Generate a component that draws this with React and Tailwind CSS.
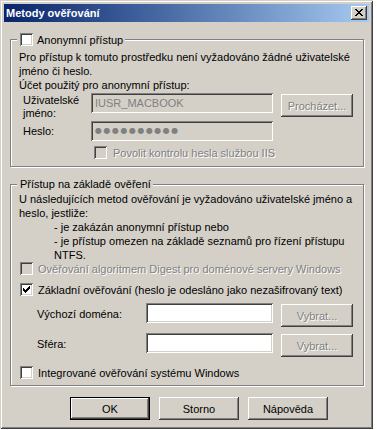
import React from "react";

// Windows classic bevels
const raised =
  "bg-[#d4d0c8] shadow-[inset_-1px_-1px_0_#404040,inset_1px_1px_0_#fff,inset_-2px_-2px_0_#808080]";
const sunken =
  "shadow-[inset_1px_1px_0_#808080,inset_-1px_-1px_0_#fff,inset_2px_2px_0_#404040,inset_-2px_-2px_0_#d4d0c8]";
const etched = "text-[#808080] [text-shadow:1px_1px_0_#fff]";

function CheckBox({ checked, disabled }) {
  return (
    <span
      className={`relative block w-[13px] h-[13px] shrink-0 ${sunken} ${
        disabled ? "bg-[#d4d0c8]" : "bg-white"
      }`}
    >
      {checked && (
        <svg
          className="absolute left-[3px] top-[3px]"
          width="7"
          height="7"
          viewBox="0 0 7 7"
          shapeRendering="crispEdges"
        >
          <path
            d="M0 2h1v3H0zM1 3h1v3H1zM2 4h1v3H2zM3 3h1v3H3zM4 2h1v3H4zM5 1h1v3H5zM6 0h1v3H6z"
            fill="#000"
          />
        </svg>
      )}
    </span>
  );
}

function CheckRow({ label, checked, disabled, gap = "gap-[5px]", className = "" }) {
  return (
    <div className={`flex items-center h-[13px] ${gap} ${className}`}>
      <CheckBox checked={checked} disabled={disabled} />
      <span className={`whitespace-nowrap ${disabled ? etched : ""}`}>{label}</span>
    </div>
  );
}

function Btn({ children, disabled, isDefault, className = "" }) {
  if (isDefault) {
    return (
      <div className={`border border-black ${className}`}>
        <div className={`h-full flex items-center justify-center ${raised}`}>{children}</div>
      </div>
    );
  }
  return (
    <div
      className={`flex items-center justify-center ${raised} ${disabled ? etched : ""} ${className}`}
    >
      {children}
    </div>
  );
}

export default function App() {
  return (
    <div className="w-[377px] h-[430px] bg-white font-['Liberation_Sans',Arial,sans-serif] text-[11px] leading-[14px] text-black">
      <div className="w-[373px] h-[429px] bg-[#d4d0c8] p-[4px] flex flex-col shadow-[inset_1px_1px_0_#d4d0c8,inset_-1px_-1px_0_#404040,inset_2px_2px_0_#fff,inset_-2px_-2px_0_#808080]">
        {/* Title bar */}
        <div className="h-[18px] shrink-0 flex items-center bg-gradient-to-r from-[#0a246a] to-[#a6caf0] pl-[2px] pr-[2px]">
          <span className="text-white font-bold whitespace-nowrap">Metody ověřování</span>
          <div className={`ml-auto w-[16px] h-[14px] relative ${raised}`}>
            <svg
              className="absolute left-[4px] top-[3px]"
              width="8"
              height="7"
              viewBox="0 0 8 7"
              shapeRendering="crispEdges"
            >
              <path
                d="M0 0h2v1H0zM6 0h2v1H6zM1 1h2v1H1zM5 1h2v1H5zM2 2h4v1H2zM3 3h2v1H3zM2 4h4v1H2zM1 5h2v1H1zM5 5h2v1H5zM0 6h2v1H0zM6 6h2v1H6z"
                fill="#000"
              />
            </svg>
          </div>
        </div>

        <div className="pl-[6px]">
          {/* Anonymous access */}
          <fieldset className="mt-[11px] w-[354px] h-[134px] border border-[#808080] shadow-[inset_1px_1px_0_#fff,1px_1px_0_#fff]">
            <legend className="ml-[6px] pl-[3px] pr-[2px] bg-[#d4d0c8]">
              <CheckRow label="Anonymní přístup" gap="gap-[4px]" />
            </legend>
            <div className="pl-[8px] pt-[4px]">
              <p className="whitespace-nowrap">
                Pro přístup k tomuto prostředku není vyžadováno žádné uživatelské
                <br />
                jméno či heslo.
              </p>
              <p className="whitespace-nowrap">Účet použitý pro anonymní přístup:</p>

              <div className="mt-[1px] h-[20px] flex items-start">
                <div className="w-[72px] pl-[4px] pt-[1px] leading-[13px]">
                  Uživatelské
                  <br />
                  jméno:
                </div>
                <div
                  className={`w-[182px] h-[20px] pl-[4px] flex items-center bg-[#d4d0c8] text-[#808080] ${sunken}`}
                >
                  IUSR_MACBOOK
                </div>
                <Btn disabled className="ml-[8px] mt-[1px] w-[72px] h-[23px]">
                  Procházet...
                </Btn>
              </div>

              <div className="mt-[8px] h-[20px] flex items-start">
                <div className="w-[72px] pl-[4px] pt-[3px]">Heslo:</div>
                <div
                  className={`w-[182px] h-[20px] pl-[4px] flex items-center bg-[#d4d0c8] text-[#808080] ${sunken}`}
                >
                  <span className="font-['DejaVu_Sans',sans-serif] text-[8px] tracking-[1.5px]">
                    ●●●●●●●●●●
                  </span>
                </div>
              </div>

              <CheckRow
                label="Povolit kontrolu hesla službou IIS"
                disabled
                gap="gap-[6px]"
                className="mt-[5px] ml-[75px]"
              />
            </div>
          </fieldset>

          {/* Authenticated access */}
          <fieldset className="mt-[11px] w-[354px] h-[208px] border border-[#808080] shadow-[inset_1px_1px_0_#fff,1px_1px_0_#fff]">
            <legend className="ml-[6px] pl-[3px] pr-[2px] bg-[#d4d0c8] leading-[13px] whitespace-nowrap">
              Přístup na základě ověření
            </legend>
            <div className="pl-[8px] pt-[1px]">
              <p className="whitespace-nowrap">
                U následujících metod ověřování je vyžadováno uživatelské jméno a
                <br />
                heslo, jestliže:
              </p>
              <p className="pl-[35px] whitespace-nowrap">
                - je zakázán anonymní přístup nebo
                <br />
                - je přístup omezen na základě seznamů pro řízení přístupu
                <br />
                NTFS.
              </p>

              <CheckRow
                label="Ověřování algoritmem Digest pro doménové servery Windows"
                disabled
                className="ml-[1px]"
              />
              <CheckRow
                label="Základní ověřování (heslo je odesláno jako nezašifrovaný text)"
                checked
                className="ml-[1px] mt-[8px]"
              />

              <div className="mt-[7px] h-[20px] flex items-start">
                <div className="w-[127px] pl-[18px] pt-[4px] whitespace-nowrap">Výchozí doména:</div>
                <div className={`w-[127px] h-[20px] bg-white ${sunken}`} />
                <Btn disabled className="ml-[8px] mt-[1px] w-[72px] h-[23px]">
                  Vybrat...
                </Btn>
              </div>

              <div className="mt-[10px] h-[20px] flex items-start">
                <div className="w-[127px] pl-[18px] pt-[4px]">Sféra:</div>
                <div className={`w-[127px] h-[20px] bg-white ${sunken}`} />
                <Btn disabled className="ml-[8px] mt-[1px] w-[72px] h-[23px]">
                  Vybrat...
                </Btn>
              </div>

              <CheckRow
                label="Integrované ověřování systému Windows"
                className="ml-[1px] mt-[13px]"
              />
            </div>
          </fieldset>
        </div>

        {/* Dialog buttons */}
        <div className="mt-[11px] pl-[66px] flex gap-[9px]">
          <Btn isDefault className="w-[80px] h-[23px]">
            OK
          </Btn>
          <Btn className="w-[80px] h-[23px]">Storno</Btn>
          <Btn className="w-[80px] h-[23px]">Nápověda</Btn>
        </div>
      </div>
    </div>
  );
}
